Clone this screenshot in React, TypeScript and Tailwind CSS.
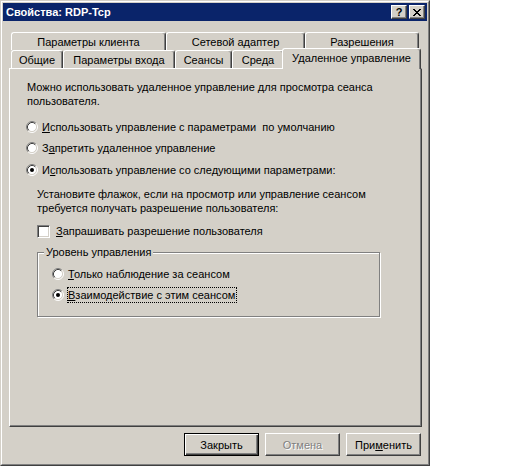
import React from "react";

function Radio({ checked }: { checked?: boolean }) {
  return (
    <svg width="12" height="12" viewBox="0 0 12 12" className="shrink-0 block">
      <circle cx="6" cy="6" r="4.5" fill="#fff" />
      <path d="M2.11 9.89A5.5 5.5 0 0 1 9.89 2.11" fill="none" stroke="#808080" />
      <path d="M9.89 2.11A5.5 5.5 0 0 1 2.11 9.89" fill="none" stroke="#fff" />
      <path d="M2.82 9.18A4.5 4.5 0 0 1 9.18 2.82" fill="none" stroke="#404040" />
      <path d="M9.18 2.82A4.5 4.5 0 0 1 2.82 9.18" fill="none" stroke="#d4d0c8" />
      {checked && <circle cx="6" cy="6" r="2" fill="#000" />}
    </svg>
  );
}

function U({ children }: { children: React.ReactNode }) {
  return <span className="underline underline-offset-[1px]">{children}</span>;
}

function Tab({ w, children }: { w: string; children: React.ReactNode }) {
  return (
    <div
      className={`${w} h-[18px] shrink-0 flex items-center justify-center border-l border-t border-r border-l-white border-t-white border-r-[#404040] rounded-t-[3px] shadow-[inset_-1px_0_0_#808080] bg-[#d4d0c8] whitespace-nowrap`}
    >
      {children}
    </div>
  );
}

function CloseGlyph() {
  const px: [number, number][] = [
    [0, 0], [1, 0], [6, 0], [7, 0],
    [1, 1], [2, 1], [5, 1], [6, 1],
    [2, 2], [3, 2], [4, 2], [5, 2],
    [3, 3], [4, 3],
    [2, 4], [3, 4], [4, 4], [5, 4],
    [1, 5], [2, 5], [5, 5], [6, 5],
    [0, 6], [1, 6], [6, 6], [7, 6],
  ];
  return (
    <svg width="8" height="7" viewBox="0 0 8 7" shapeRendering="crispEdges" className="block">
      {px.map(([x, y], i) => (
        <rect key={i} x={x} y={y} width="1" height="1" fill="#000" />
      ))}
    </svg>
  );
}

function CapButton({ children }: { children: React.ReactNode }) {
  return (
    <div className="w-[16px] h-[14px] bg-[#d4d0c8] border border-t-white border-l-white border-r-[#404040] border-b-[#404040] shadow-[inset_-1px_-1px_0_#808080] flex items-center justify-center">
      {children}
    </div>
  );
}

export default function App() {
  return (
    <div className="w-[512px] h-[466px] bg-white flex font-['Liberation_Sans',Arial,sans-serif] text-[11px] leading-[14px] text-black">
      <div className="w-[430px] h-[466px] border border-t-[#d4d0c8] border-l-[#d4d0c8] border-r-[#404040] border-b-[#404040]">
        <div className="w-full h-full border border-t-white border-l-white border-r-[#808080] border-b-[#808080] bg-[#d4d0c8] p-px flex flex-col">
          {/* Title bar */}
          <div className="h-[18px] bg-[#0a246a] flex items-center pl-[3px] pr-[2px] shrink-0">
            <div className="text-white font-bold text-[11px] flex-1">Свойства: RDP-Tcp</div>
            <div className="flex gap-[2px]">
              <CapButton>
                <span className="font-bold text-[11px] leading-[11px] text-black">?</span>
              </CapButton>
              <CapButton>
                <CloseGlyph />
              </CapButton>
            </div>
          </div>

          {/* Body */}
          <div className="pl-[6px] pt-[11px] flex flex-col">
            {/* Tabs row 1 */}
            <div className="flex ml-[2px]">
              <Tab w="w-[155px]">Параметры клиента</Tab>
              <Tab w="w-[139px]">Сетевой адаптер</Tab>
              <Tab w="w-[114px]">Разрешения</Tab>
            </div>
            {/* Tabs row 2 */}
            <div className="flex items-end h-[18px] ml-[2px]">
              <Tab w="w-[52px]">Общие</Tab>
              <Tab w="w-[112px]">Параметры входа</Tab>
              <Tab w="w-[57px]">Сеансы</Tab>
              <Tab w="w-[52px]">Среда</Tab>
              <div className="relative z-10 w-[139px] h-[21px] -ml-[2px] -mb-px shrink-0 flex items-start justify-center pt-[2px] border-l border-t border-r border-l-white border-t-white border-r-[#404040] rounded-t-[3px] shadow-[inset_-1px_0_0_#808080] bg-[#d4d0c8] whitespace-nowrap">
                Удаленное управление
              </div>
            </div>

            {/* Panel */}
            <div className="w-[413px] h-[359px] border border-t-white border-l-white border-r-[#404040] border-b-[#404040] shadow-[inset_-1px_-1px_0_#808080] flex flex-col">
              <p className="ml-[17px] mt-[11px]">
                Можно использовать удаленное управление для просмотра сеанса
                <br />
                пользователя.
              </p>

              <div className="flex items-center h-[14px] ml-[16px] mt-[12px] gap-[4px]">
                <Radio />
                <span>
                  <U>И</U>спользовать управление с параметрами&nbsp; по умолчанию
                </span>
              </div>
              <div className="flex items-center h-[14px] ml-[16px] mt-[7px] gap-[4px]">
                <Radio />
                <span>
                  З<U>а</U>претить удаленное управление
                </span>
              </div>
              <div className="flex items-center h-[14px] ml-[16px] mt-[8px] gap-[4px]">
                <Radio checked />
                <span>
                  И<U>с</U>пользовать управление со следующими параметрами:
                </span>
              </div>

              <p className="ml-[27px] mt-[10px]">
                Установите флажок, если на просмотр или управление сеансом
                <br />
                требуется получать разрешение пользователя:
              </p>

              <div className="flex items-center h-[14px] ml-[27px] mt-[9px] gap-[6px]">
                <div className="w-[13px] h-[13px] shrink-0 bg-white border border-t-[#808080] border-l-[#808080] border-r-white border-b-white shadow-[inset_1px_1px_0_#404040,inset_-1px_-1px_0_#d4d0c8]" />
                <span>
                  <U>З</U>апрашивать разрешение пользователя
                </span>
              </div>

              {/* Group box */}
              <div className="ml-[27px] mt-[14px] w-[343px] h-[65px] border border-[#808080] shadow-[inset_1px_1px_0_#fff,1px_1px_0_#fff] flex flex-col">
                <div className="-mt-[8px] ml-[6px] self-start px-[2px] bg-[#d4d0c8]">Уровень управления</div>
                <div className="flex items-center h-[14px] ml-[14px] mt-[8px]">
                  <Radio />
                  <span className="ml-[4px]">
                    <U>Т</U>олько наблюдение за сеансом
                  </span>
                </div>
                <div className="flex items-center h-[16px] ml-[14px] mt-[6px]">
                  <Radio checked />
                  <span className="ml-[3px] border border-dotted border-black pr-px">
                    <U>В</U>заимодействие с этим сеансом
                  </span>
                </div>
              </div>
            </div>

            {/* Buttons */}
            <div className="w-[413px] mt-[6px] flex justify-end gap-[6px] pr-px">
              <div className="w-[75px] h-[23px] border border-black shadow-[inset_1px_1px_0_#fff,inset_-1px_-1px_0_#404040,inset_-2px_-2px_0_#808080] flex items-center justify-center">
                Закрыть
              </div>
              <div className="w-[75px] h-[23px] border border-t-white border-l-white border-r-[#404040] border-b-[#404040] shadow-[inset_-1px_-1px_0_#808080] flex items-center justify-center text-[#808080] [text-shadow:1px_1px_0_#fff]">
                Отмена
              </div>
              <div className="w-[75px] h-[23px] border border-t-white border-l-white border-r-[#404040] border-b-[#404040] shadow-[inset_-1px_-1px_0_#808080] flex items-center justify-center">
                <span>
                  При<U>м</U>енить
                </span>
              </div>
            </div>
          </div>
        </div>
      </div>
    </div>
  );
}
